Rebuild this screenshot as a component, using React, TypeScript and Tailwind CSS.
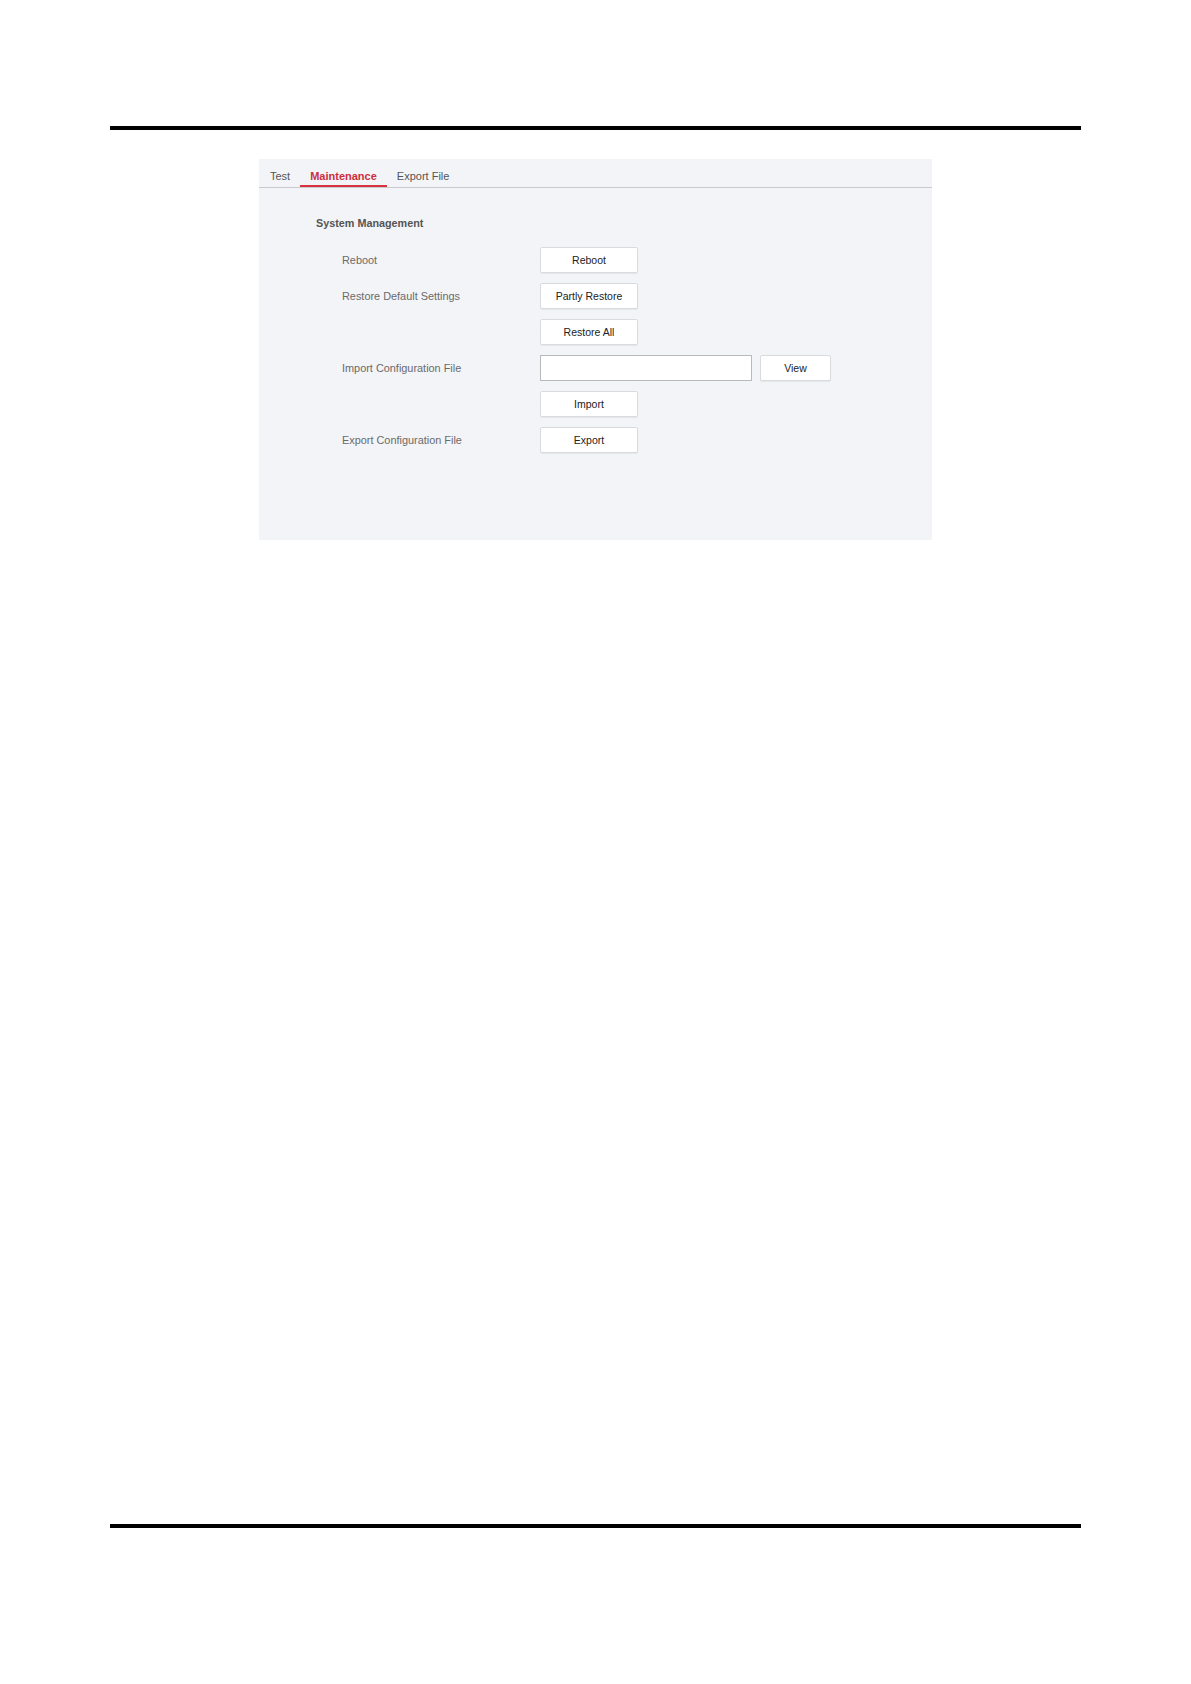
const font = { fontFamily: '"Liberation Sans", Arial, sans-serif' }

type Row = {
  label?: string
  buttons?: string[]
  input?: boolean
}

const rows: Row[] = [
  { label: 'Reboot', buttons: ['Reboot'] },
  { label: 'Restore Default Settings', buttons: ['Partly Restore'] },
  { buttons: ['Restore All'] },
  { label: 'Import Configuration File', input: true },
  { buttons: ['Import'] },
  { label: 'Export Configuration File', buttons: ['Export'] },
]

function Btn({ text, wide }: { text: string; wide?: boolean }) {
  return (
    <button
      className={`h-[26px] ${wide ? 'w-[71px]' : 'w-[98px]'} bg-white border border-[#dadbde] rounded-[2px] shadow-[0_1px_1px_rgba(0,0,0,0.06)] text-[10.5px] text-[#222] leading-none`}
    >
      {text}
    </button>
  )
}

export default function App() {
  const tabs = ['Test', 'Maintenance', 'Export File']

  return (
    <div
      className="w-[1191px] h-[1684px] bg-white flex flex-col px-[110px] pt-[126px] pb-[156px]"
      style={font}
    >
      <div className="h-[4px] bg-black" />

      <div className="ml-[149px] mt-[29px] w-[673px] h-[381px] bg-[#f3f4f7] flex flex-col">
        {/* Tabs */}
        <div className="h-[29px] flex pl-[1px] border-b border-[#c9cacd]">
          {tabs.map((t) => {
            const active = t === 'Maintenance'
            return (
              <div
                key={t}
                className={`h-[28px] px-[10px] pt-[11px] text-[11px] leading-[12px] ${
                  active
                    ? 'font-bold text-[#cc2f3c] border-b-2 border-[#d8323f]'
                    : 'text-[#555]'
                }`}
              >
                {t}
              </div>
            )
          })}
        </div>

        {/* Section */}
        <div className="pl-[57px] pt-[28px]">
          <div className="text-[10.8px] leading-[14px] font-bold text-[#555]">
            System Management
          </div>

          <div className="mt-[17px] pl-[26px] flex flex-col gap-[10px]">
            {rows.map((r, i) => (
              <div key={i} className="flex items-center h-[26px]">
                <div className="w-[198px] pt-[1px] text-[10.9px] text-[#6a6a6a]">
                  {r.label ?? ''}
                </div>
                {r.input ? (
                  <div className="flex gap-[8px]">
                    <input
                      className="h-[26px] w-[212px] bg-white border border-[#b9b9bc] outline-none"
                      aria-label="Configuration file"
                    />
                    <Btn text="View" wide />
                  </div>
                ) : (
                  r.buttons?.map((b) => <Btn key={b} text={b} />)
                )}
              </div>
            ))}
          </div>
        </div>
      </div>

      <div className="h-[4px] bg-black mt-auto" />
    </div>
  )
}
